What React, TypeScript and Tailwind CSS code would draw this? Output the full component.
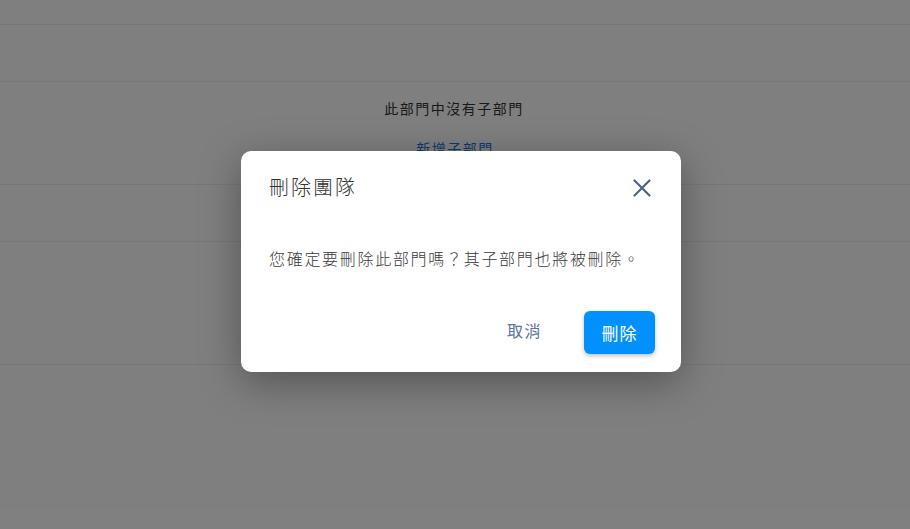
import React from "react";

const font = { fontFamily: '"Noto Sans CJK TC", "Noto Sans", sans-serif' };

export default function App() {
  return (
    <div className="relative w-[910px] h-[529px] overflow-hidden bg-white" style={font}>
      {/* page underneath */}
      <div className="flex flex-col">
        <div className="h-[25px] border-b border-[#eeeeee]" />
        <div className="h-[57px] border-b border-[#eeeeee]" />
        <div className="h-[103px] border-b border-[#eeeeee] flex flex-col items-center pt-[16px]">
          <div className="text-[14px] leading-[20px] tracking-[1.5px] text-[#333333] mr-[2px]">此部門中沒有子部門</div>
          <div className="mt-[20px] text-[14px] leading-[20px] tracking-[1.5px] text-[#1a75de]">新增子部門</div>
        </div>
        <div className="h-[57px] border-b border-[#eeeeee]" />
        <div className="h-[123px] border-b border-[#eeeeee]" />
      </div>

      {/* overlay */}
      <div className="absolute inset-0 bg-black/50 flex items-start justify-center pt-[151px]">
        <div className="w-[440px] h-[221px] bg-white rounded-[10px] shadow-[0_10px_40px_rgba(0,0,0,0.35)] flex flex-col ml-[12px]">
          <div className="flex items-center justify-between pl-[28px] pr-[30px] pt-[22px]">
            <div className="text-[20px] leading-[28px] tracking-[2px] text-[#333333] font-light">刪除團隊</div>
            <svg width="18" height="18" viewBox="0 0 18 18" className="mt-[2px]">
              <path d="M1.5 1.5 L16.5 16.5 M16.5 1.5 L1.5 16.5" stroke="#4a6585" strokeWidth="2.2" strokeLinecap="round" />
            </svg>
          </div>
          <div className="pl-[28px] pt-[45px] text-[16px] leading-[24px] tracking-[1.7px] text-[#3a3a3a] font-light">
            您確定要刪除此部門嗎？其子部門也將被刪除。
          </div>
          <div className="flex items-center justify-end gap-[42px] pr-[26px] mt-auto mb-[18px]">
            <button className="text-[16px] tracking-[1.5px] text-[#5c7599] bg-transparent pb-[6px]">取消</button>
            <button className="w-[71px] h-[43px] rounded-[6px] bg-[#0091ff] text-white text-[17px] tracking-[1px] shadow-[0_2px_4px_rgba(0,0,0,0.25)]">
              刪除
            </button>
          </div>
        </div>
      </div>
    </div>
  );
}
